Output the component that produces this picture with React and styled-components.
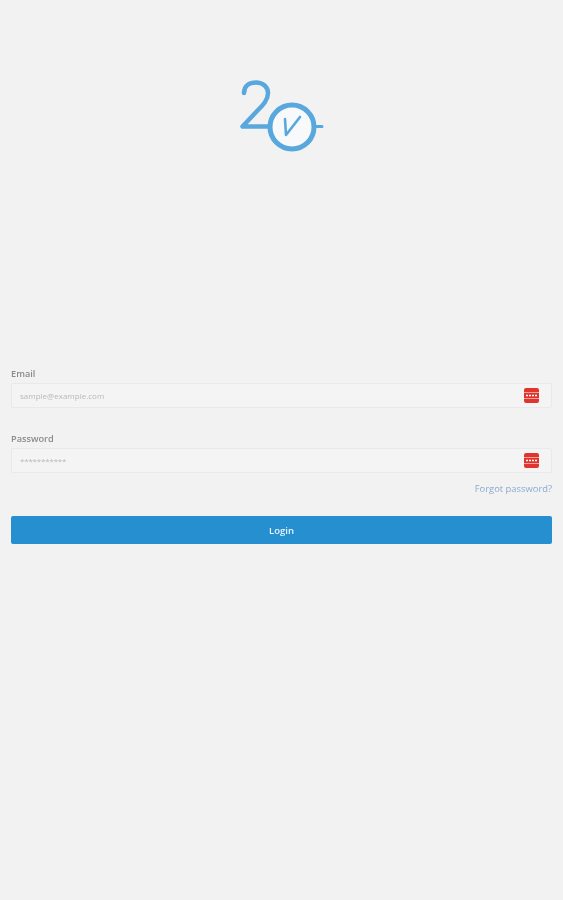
import React from "react";
import styled, { createGlobalStyle } from "styled-components";

const GlobalStyle = createGlobalStyle`
  html, body {
    margin: 0;
    padding: 0;
    background: #f2f2f3;
  }
  * {
    box-sizing: border-box;
  }
`;

const Page = styled.div`
  width: 563px;
  height: 900px;
  padding: 0 11px;
  background: #f2f2f3;
  font-family: "Open Sans", "Liberation Sans", sans-serif;
  filter: blur(0.7px);
`;

const LogoRow = styled.div`
  display: flex;
  justify-content: center;
  height: 366px;
  padding-top: 79px;
`;

const Field = styled.div`
  display: flex;
  flex-direction: column;
  margin-bottom: 23px;
`;

const Label = styled.label`
  height: 17px;
  font-size: 9.2px;
  line-height: 15px;
  font-weight: 600;
  color: #8b8b8b;
`;

const InputBox = styled.div`
  display: flex;
  align-items: center;
  justify-content: space-between;
  height: 25px;
  padding: 0 12px 0 8px;
  border: 1px solid #e9e9ea;
  border-radius: 2px;
  background: #f4f4f5;
`;

const Hint = styled.span`
  font-size: 8px;
  color: #b9b9b9;
  letter-spacing: ${(p) => (p.$dots ? "-0.2px" : "0")};
`;

const ForgotRow = styled.div`
  display: flex;
  justify-content: flex-end;
  height: 34px;
  margin-top: -14px;
`;

const Forgot = styled.a`
  font-size: 9.4px;
  line-height: 14px;
  color: #8aa9d0;
`;

const LoginButton = styled.button`
  display: block;
  width: 100%;
  height: 28px;
  border: 0;
  border-radius: 2px;
  background: #268fd0;
  color: #e8f3fb;
  font-family: inherit;
  font-size: 9.5px;
  font-weight: 600;
`;

const Logo = () => (
  <svg width="86" height="74" viewBox="0 0 86 74" fill="none" stroke="#58a8dd">
    <path
      d="M5 14 C5 6 11 3.500 17 3.500 C24 3.500 29 8 29 14 C29 21 24 26 19 31 L3.500 47.500 L30 47.500"
      strokeWidth="4.500"
      strokeLinecap="round"
      strokeLinejoin="round"
    />
    <circle cx="53" cy="48" r="22" strokeWidth="5" fill="#f8f9fa" />
    <path d="M75 47.500 L83 47.500" strokeWidth="3" strokeLinecap="round" />
    <path d="M46 40 L47 56 L61 38" strokeWidth="2.600" strokeLinecap="round" strokeLinejoin="round" />
  </svg>
);

const Badge = () => (
  <svg width="15" height="15" viewBox="0 0 15 15">
    <rect width="15" height="15" rx="2" fill="#e0352f" />
    <rect x="0" y="4" width="15" height="1" fill="#f2a09c" />
    <rect x="0" y="10" width="15" height="1" fill="#f2a09c" />
    <path d="M2 7.500 H13" stroke="#fff" strokeWidth="1.500" strokeDasharray="2 1" />
  </svg>
);

export default function App() {
  return (
    <>
      <GlobalStyle />
      <Page>
        <LogoRow>
          <Logo />
        </LogoRow>
        <Field>
          <Label>Email</Label>
          <InputBox>
            <Hint>sample@example.com</Hint>
            <Badge />
          </InputBox>
        </Field>
        <Field>
          <Label>Password</Label>
          <InputBox>
            <Hint $dots>***********</Hint>
            <Badge />
          </InputBox>
        </Field>
        <ForgotRow>
          <Forgot>Forgot password?</Forgot>
        </ForgotRow>
        <LoginButton>Login</LoginButton>
      </Page>
    </>
  );
}
